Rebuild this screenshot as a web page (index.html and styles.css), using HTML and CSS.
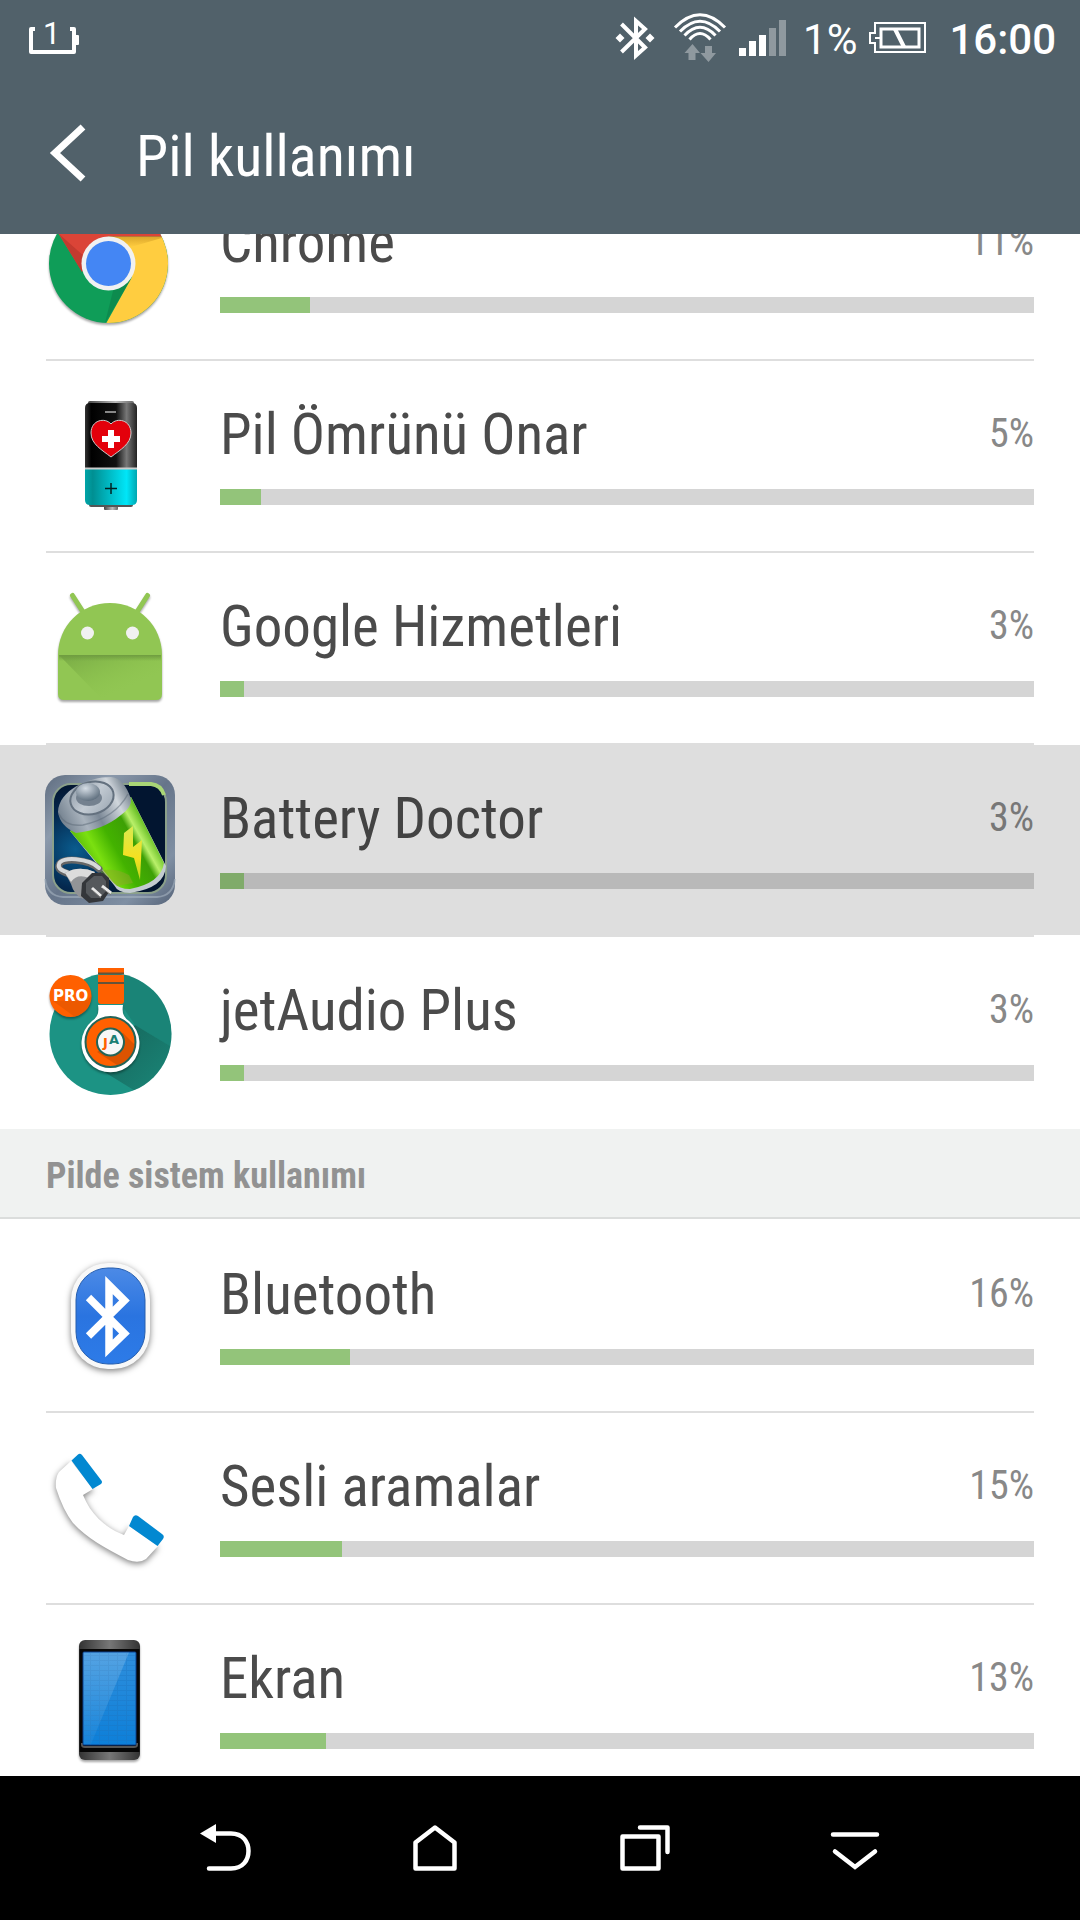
FILE: index.html
```
<!DOCTYPE html>
<html lang="tr">
<head>
    <meta charset="UTF-8">
    <meta name="viewport" content="width=device-width, initial-scale=1.0">
    <title>Pil kullanımı</title>
    <link rel="stylesheet" href="styles.css">
</head>
<body>
    <!-- Durum çubuğu -->
    <div class="status-bar">
        <svg class="status-battery-level" width="52" height="36" viewBox="0 0 52 36">
            <path d="M7 9H3V32H46V9H42" fill="none" stroke="#fff" stroke-width="4" stroke-linejoin="round"/>
            <rect x="46" y="15" width="5" height="10" rx="1" fill="#fff"/>
            <text x="15" y="24" font-size="31" fill="#fff">1</text>
        </svg>
        <div class="status-icons">
            <svg width="38" height="44" viewBox="0 0 38 44">
                <path d="M5.500 8L29 31.500L20 39.500V5L29 13L5.500 36" fill="none" stroke="#fff" stroke-width="4"/>
                <path d="M4 17.500l4.500 4.500-4.500 4.500-4.500-4.500zM34 17.500l4.500 4.500-4.500 4.500-4.500-4.500z" fill="#fff"/>
            </svg>
            <svg class="wifi" width="52" height="50" viewBox="0 0 52 50">
                <g fill="none" stroke="#fff" stroke-width="3">
                    <path d="M1 14.500Q26-11 51 14.500"/>
                    <path d="M6 18.500Q26-2 46 18.500"/>
                    <path d="M10.500 22.500Q26 6 41.500 22.500"/>
                    <path d="M15.500 26.500Q26 14.500 36.500 26.500"/>
                </g>
                <path d="M10.500 40L18.500 31 26 40H21.500V47H14.500V40zM26.500 40H31V33H38V40H42L34.500 49z" fill="#8f999f"/>
            </svg>
            <svg class="signal" width="48" height="36" viewBox="0 0 48 36">
                <path d="M0 28H7V36H0zM10 21H17V36H10zM20 15H27V36H20z" fill="#fff"/>
                <path d="M30 8H37V36H30zM40 0H47V36H40z" fill="#8f999f"/>
            </svg>
            <span class="status-percent">1%</span>
            <svg class="charge" width="58" height="32" viewBox="0 0 58 32">
                <path d="M6 1H56V30H6V21H1V11H6zM6 16H12" fill="none" stroke="#fff" stroke-width="2"/>
                <path d="M12 7H50V25H12z" fill="none" stroke="#fff" stroke-width="3"/>
                <path d="M26 7L35 25" stroke="#fff" stroke-width="4"/>
            </svg>
            <span class="clock">16:00</span>
        </div>
    </div>

    <!-- Başlık -->
    <header class="title-bar">
        <button class="back-button" aria-label="Geri">
            <svg width="38" height="58" viewBox="0 0 38 58">
                <path d="M34 1L6 27L34 53" fill="none" stroke="#fff" stroke-width="7"/>
            </svg>
        </button>
        <h1>Pil kullanımı</h1>
    </header>

    <main class="content">
        <ul class="app-list scrolled">
            <li>
                <a class="app" href="#">
                    <svg class="app-icon" viewBox="0 0 130 130">
                        <defs>
                            <clipPath id="chromeClip"><circle cx="63.500" cy="64.500" r="59.500"/></clipPath>
                            <linearGradient id="chromeShade" x1="0" y1="0" x2="0" y2="1">
                                <stop offset="0" stop-color="#c28c1c" stop-opacity=".6"/>
                                <stop offset="1" stop-color="#c28c1c" stop-opacity="0"/>
                            </linearGradient>
                        </defs>
                        <g class="shadow">
                            <circle cx="63.500" cy="64.500" r="59.500" fill="#0f9d58"/>
                        </g>
                        <g clip-path="url(#chromeClip)">
                            <path d="M63 37.500H130V130H58L87 78z" fill="#ffcd40"/>
                            <path d="M63 37.500H122L86 48z" fill="url(#chromeShade)"/>
                            <path d="M0 0H130V37.500H63L37 73L10 29z" fill="#db4437"/>
                            <path d="M14 35L37 73L40 58z" fill="#b3342a" opacity=".6"/>
                            <path d="M60 124L86 80L68 92z" fill="#0a7040" opacity=".4"/>
                        </g>
                        <circle cx="63.500" cy="64.500" r="27" fill="#f1f1f1"/>
                        <circle cx="63.500" cy="64.500" r="22.500" fill="#4486f4"/>
                    </svg>
                    <div class="app-info">
                        <div class="app-text"><span class="app-name">Chrome</span><span class="app-percent">11%</span></div>
                        <div class="bar"><div class="bar-fill" style="width: 11%"></div></div>
                    </div>
                </a>
            </li>
            <li>
                <a class="app" href="#">
                    <svg class="app-icon" viewBox="0 0 130 130">
                        <defs>
                            <linearGradient id="blackCell">
                                <stop offset="0" stop-color="#333"/>
                                <stop offset=".12" stop-color="#000"/>
                                <stop offset=".6" stop-color="#111"/>
                                <stop offset=".8" stop-color="#777"/>
                                <stop offset="1" stop-color="#222"/>
                            </linearGradient>
                            <linearGradient id="cyanCell">
                                <stop offset="0" stop-color="#00a5a8"/>
                                <stop offset=".15" stop-color="#008f92"/>
                                <stop offset=".8" stop-color="#00e6f8"/>
                                <stop offset="1" stop-color="#00a6b0"/>
                            </linearGradient>
                            <linearGradient id="metal">
                                <stop offset="0" stop-color="#444"/>
                                <stop offset=".6" stop-color="#bbb"/>
                                <stop offset="1" stop-color="#666"/>
                            </linearGradient>
                        </defs>
                        <rect x="43" y="10" width="46" height="6" rx="2" fill="url(#metal)"/>
                        <rect x="59" y="113" width="14" height="6" rx="1" fill="url(#metal)"/>
                        <rect x="44" y="111" width="44" height="5" rx="2" fill="#555"/>
                        <path d="M40 78V17Q40 12 45 12H87Q92 12 92 17V78z" fill="url(#blackCell)"/>
                        <path d="M40 77H92V109Q92 114 87 114H45Q40 114 40 109z" fill="url(#cyanCell)"/>
                        <path d="M40 77.500H92" stroke="#ccc" stroke-width="2"/>
                        <path d="M60 21H71" stroke="#888" stroke-width="2"/>
                        <path d="M66 66C57 59 46 53 46 42C46 29 60 26 66 33C72 26 86 29 86 42C86 53 75 59 66 66z" fill="#e3000b" stroke="#ccc" stroke-width="1"/>
                        <path d="M57 48H75M66 39V57" stroke="#fff" stroke-width="6"/>
                        <path d="M60 97.500H72M66 92V103" stroke="#022" stroke-width="1.500"/>
                    </svg>
                    <div class="app-info">
                        <div class="app-text"><span class="app-name">Pil Ömrünü Onar</span><span class="app-percent">5%</span></div>
                        <div class="bar"><div class="bar-fill" style="width: 5%"></div></div>
                    </div>
                </a>
            </li>
            <li>
                <a class="app" href="#">
                    <svg class="app-icon" viewBox="0 0 130 130">
                        <defs>
                            <linearGradient id="droidShade" x1="0" y1="0" x2="1" y2="1">
                                <stop offset="0" stop-color="#77a845"/>
                                <stop offset=".7" stop-color="#8bc34a" stop-opacity="0"/>
                            </linearGradient>
                            <linearGradient id="droidFold" x1="0" y1="0" x2="0" y2="1">
                                <stop offset="0" stop-color="#6f9c40"/>
                                <stop offset="1" stop-color="#6f9c40" stop-opacity="0"/>
                            </linearGradient>
                        </defs>
                        <g class="shadow">
                            <path d="M27.500 12.500L40 32M102.500 12.500L90 32" stroke="#91c653" stroke-width="5" stroke-linecap="round"/>
                            <path d="M13 72C13 43 36 20 65 20S117 43 117 72V111Q117 117 111 117H19Q13 117 13 111z" fill="#91c653"/>
                        </g>
                        <path d="M14 72H116V96L105 117H58z" fill="url(#droidShade)"/>
                        <rect x="14" y="72" width="102" height="6" fill="url(#droidFold)"/>
                        <circle cx="42.500" cy="50" r="6.500" fill="#f1f1f1"/>
                        <circle cx="87.500" cy="50" r="6.500" fill="#f1f1f1"/>
                    </svg>
                    <div class="app-info">
                        <div class="app-text"><span class="app-name">Google Hizmetleri</span><span class="app-percent">3%</span></div>
                        <div class="bar"><div class="bar-fill" style="width: 3%"></div></div>
                    </div>
                </a>
            </li>
            <li>
                <a class="app pressed" href="#">
                    <svg class="app-icon" viewBox="0 0 130 130">
                        <defs>
                            <linearGradient id="frame" x1="0" y1="0" x2="1" y2="1">
                                <stop offset="0" stop-color="#5f6d80"/>
                                <stop offset=".25" stop-color="#8c9aac"/>
                                <stop offset=".5" stop-color="#66758a"/>
                                <stop offset=".8" stop-color="#7f8fa3"/>
                                <stop offset="1" stop-color="#556378"/>
                            </linearGradient>
                            <radialGradient id="night" cx=".2" cy=".6" r=".6">
                                <stop offset="0" stop-color="#0a5c8e"/>
                                <stop offset=".6" stop-color="#04284e"/>
                                <stop offset="1" stop-color="#021530"/>
                            </radialGradient>
                            <linearGradient id="greenCell" gradientUnits="userSpaceOnUse" x1="42" y1="90" x2="106" y2="54">
                                <stop offset="0" stop-color="#58b80a"/>
                                <stop offset=".2" stop-color="#7be010"/>
                                <stop offset=".45" stop-color="#43b200"/>
                                <stop offset=".72" stop-color="#3da005"/>
                                <stop offset=".82" stop-color="#b9f06a"/>
                                <stop offset="1" stop-color="#50b010"/>
                            </linearGradient>
                            <linearGradient id="steel" gradientUnits="userSpaceOnUse" x1="16" y1="50" x2="84" y2="16">
                                <stop offset="0" stop-color="#6f7d8b"/>
                                <stop offset=".3" stop-color="#a9b3bd"/>
                                <stop offset=".5" stop-color="#7b8896"/>
                                <stop offset=".8" stop-color="#d0d6dc"/>
                                <stop offset="1" stop-color="#76838f"/>
                            </linearGradient>
                            <linearGradient id="capTop" x1="0" y1="0" x2="1" y2="1">
                                <stop offset="0" stop-color="#8c98a5"/>
                                <stop offset=".5" stop-color="#c3cbd3"/>
                                <stop offset="1" stop-color="#98a4b0"/>
                            </linearGradient>
                            <radialGradient id="knob" cx=".4" cy=".3" r=".7">
                                <stop offset="0" stop-color="#d5dde5"/>
                                <stop offset="1" stop-color="#617180"/>
                            </radialGradient>
                            <linearGradient id="bolt" x1="0" y1="0" x2="0" y2="1">
                                <stop offset="0" stop-color="#d8ea50"/>
                                <stop offset=".6" stop-color="#f5e020"/>
                                <stop offset="1" stop-color="#b8d820"/>
                            </linearGradient>
                        </defs>
                        <rect width="130" height="130" rx="20" fill="url(#frame)"/>
                        <rect x="8" y="9" width="113" height="109" rx="18" fill="url(#night)" stroke="#8ba08a" stroke-width="2"/>
                        <path d="M84 9H106Q116 10 119 20" fill="none" stroke="#a9d676" stroke-width="4"/>
                        <path d="M0 104Q2 121 18 122H112Q128 121 130 104" fill="none" stroke="#a5b2c0" stroke-width="2" opacity=".6"/>
                        <path d="M25 56L69 110Q73 118 85 118Q120 113 121 91L86 22z" fill="#c3cbd0"/>
                        <path d="M25 56L69 108Q74 114 85 114Q116 108 119 88L86 22z" fill="url(#greenCell)"/>
                        <path d="M13 37C14 15 43 2 66 2Q79 3 86 24Q87 32 76 40Q58 55 31 58Q15 51 13 37z" fill="url(#steel)"/>
                        <path d="M14 39Q20 52 38 50Q70 43 83 19" fill="none" stroke="#5b6977" stroke-width="1.500" opacity=".5"/>
                        <ellipse cx="47" cy="23" rx="22" ry="16" transform="rotate(-15 47 23)" fill="url(#capTop)" stroke="#64717f" stroke-width="2"/>
                        <ellipse cx="44" cy="23" rx="13" ry="8" fill="#74818f"/>
                        <ellipse cx="43" cy="17" rx="12" ry="9" fill="url(#knob)"/>
                        <path d="M79 58L88 51V72L97 65L95 105L89 83L78 80z" fill="url(#bolt)"/>
                        <path d="M54 96Q70 92 84 100L88 108L72 111z" fill="#8ea62a" opacity=".5"/>
                        <path d="M54 94C44 84 16 82 14 90C12 97 22 97 30 102" fill="none" stroke="#666" stroke-width="7" stroke-linecap="round"/>
                        <path d="M54 93C44 83 16 81 14 89C12 96 22 96 30 101" fill="none" stroke="#d5d8da" stroke-width="4" stroke-linecap="round"/>
                        <path d="M20 98Q34 90 50 97L38 124Q29 120 26 109z" fill="#929497"/>
                        <path d="M20 98Q34 90 50 97L44 103Q32 98 26 107z" fill="#dcdcdc"/>
                        <path d="M37 108L47 98H58L64 103V117L58 126L44 128L36 121z" fill="#34363a"/>
                        <path d="M41 108L49 101H57L61 106V116L55 123H46L41 118z" fill="#55585c"/>
                        <path d="M47 113L56 121M57 111L66 118" stroke="#e8e8e8" stroke-width="3"/>
                        <path d="M47 115L56 123M57 113L66 120" stroke="#777" stroke-width="1"/>
                    </svg>
                    <div class="app-info">
                        <div class="app-text"><span class="app-name">Battery Doctor</span><span class="app-percent">3%</span></div>
                        <div class="bar"><div class="bar-fill" style="width: 3%"></div></div>
                    </div>
                </a>
            </li>
            <li>
                <a class="app" href="#">
                    <svg class="app-icon" viewBox="0 0 130 130">
                        <defs>
                            <clipPath id="jetClip"><circle cx="65.500" cy="67" r="61"/></clipPath>
                            <clipPath id="proClip"><circle cx="25.500" cy="29" r="21"/></clipPath>
                            <linearGradient id="jetShade" gradientUnits="userSpaceOnUse" x1="80" y1="60" x2="125" y2="105">
                                <stop offset="0" stop-color="#14594f" stop-opacity=".7"/>
                                <stop offset="1" stop-color="#14594f" stop-opacity=".3"/>
                            </linearGradient>
                        </defs>
                        <circle cx="65.500" cy="67" r="61" fill="#1c9384"/>
                        <g clip-path="url(#jetClip)">
                            <path d="M78 1L130 40V82L90 58L78 40z" fill="#14594f" opacity=".25"/>
                            <path d="M90 58L130 82V130H100L48 98z" fill="url(#jetShade)"/>
                        </g>
                        <path d="M53 38H78Q76 49 84 54A29 29 0 1 1 47 54Q55 49 53 38z" fill="#fff" class="shadow"/>
                        <path d="M53 1H79V6H53zM53 8H79V15H53zM53 17H79V34Q79 37 76 37H56Q53 37 53 34z" fill="#ff6000"/>
                        <path d="M53 6.500H79M53 16H79" stroke="#64533a" stroke-width="2"/>
                        <circle cx="65.500" cy="75" r="25" fill="#ff6000" stroke="#236458" stroke-width="2"/>
                        <path d="M52 85L72 98A25 25 0 0 0 90 78L78 66z" fill="#b94500" opacity=".5"/>
                        <circle cx="65.500" cy="75" r="13.500" fill="#f7f7f7" stroke="#236458" stroke-width="2"/>
                        <text class="logo" x="58" y="80" font-size="13" fill="#ff6000">J</text>
                        <text class="logo" x="64" y="77" font-size="13" fill="#1c7f73">A</text>
                        <circle cx="25.500" cy="29" r="21" fill="#ff6000" class="shadow"/>
                        <g clip-path="url(#proClip)">
                            <path d="M8 34L30 50L50 40V24L43 33z" fill="#d95200" opacity=".5"/>
                        </g>
                        <text class="logo" x="8" y="34" font-size="15" fill="#fff">PRO</text>
                    </svg>
                    <div class="app-info">
                        <div class="app-text"><span class="app-name">jetAudio Plus</span><span class="app-percent">3%</span></div>
                        <div class="bar"><div class="bar-fill" style="width: 3%"></div></div>
                    </div>
                </a>
            </li>
        </ul>

        <h2>Pilde sistem kullanımı</h2>

        <ul class="app-list">
            <li>
                <a class="app" href="#">
                    <svg class="app-icon" viewBox="0 0 130 130">
                        <defs>
                            <linearGradient id="btBlue" x1="0" y1="0" x2="0" y2="1">
                                <stop offset="0" stop-color="#4c8ae6"/>
                                <stop offset=".5" stop-color="#2a74e0"/>
                                <stop offset="1" stop-color="#2d7be8"/>
                            </linearGradient>
                        </defs>
                        <rect x="26" y="12" width="79" height="106" rx="37" fill="#f8f8f8" class="shadow-strong"/>
                        <rect x="31" y="17" width="69" height="96" rx="32" fill="url(#btBlue)" stroke="#275fae" stroke-width="1"/>
                        <path d="M43.500 46.500L79.500 82.500L64 97.500V34L79.500 49.500L43.500 85" fill="none" stroke="#fff" stroke-width="7.500"/>
                    </svg>
                    <div class="app-info">
                        <div class="app-text"><span class="app-name">Bluetooth</span><span class="app-percent">16%</span></div>
                        <div class="bar"><div class="bar-fill" style="width: 16%"></div></div>
                    </div>
                </a>
            </li>
            <li>
                <a class="app" href="#">
                    <svg class="app-icon" viewBox="0 0 130 130">
                        <path class="shadow-strong" d="M26 18L48 46L38 52C46 72 61 85 79 92L84 83L113 103L101 116Q94 121 83 117C60 105 42 95 28 80Q18 67 11 45Q10 35 14 29z" fill="#fff"/>
                        <path d="M26.500 17.500L33 11.500Q35 10 37 12L56 37Q58 39 56 41L47.500 46zM84 83L88 74Q90 71 93 73L117 91Q120 93 118 96L112.500 103z" fill="#0288d1"/>
                    </svg>
                    <div class="app-info">
                        <div class="app-text"><span class="app-name">Sesli aramalar</span><span class="app-percent">15%</span></div>
                        <div class="bar"><div class="bar-fill" style="width: 15%"></div></div>
                    </div>
                </a>
            </li>
            <li>
                <a class="app" href="#">
                    <svg class="app-icon" viewBox="0 0 130 130">
                        <defs>
                            <linearGradient id="bezel">
                                <stop offset="0" stop-color="#333"/>
                                <stop offset=".5" stop-color="#777"/>
                                <stop offset="1" stop-color="#333"/>
                            </linearGradient>
                            <linearGradient id="screen" x1="0" y1="0" x2="0" y2="1">
                                <stop offset="0" stop-color="#2f8fdd"/>
                                <stop offset="1" stop-color="#0d7fd8"/>
                            </linearGradient>
                            <linearGradient id="glare" x1="0" y1="0" x2="0" y2="1">
                                <stop offset="0" stop-color="#fff" stop-opacity=".18"/>
                                <stop offset="1" stop-color="#fff" stop-opacity=".04"/>
                            </linearGradient>
                            <pattern id="grid" width="9" height="5" patternUnits="userSpaceOnUse">
                                <path d="M0 .5H9M.5 0V5" stroke="#1c72bd" stroke-width="1" opacity=".35"/>
                            </pattern>
                        </defs>
                        <rect x="34" y="5" width="61" height="120" rx="6" fill="url(#bezel)" class="shadow"/>
                        <rect x="34.500" y="14" width="60" height="103" fill="#060606"/>
                        <path d="M37 108V110Q37 112 40 112H89Q92 112 92 110V108" fill="none" stroke="#555" stroke-width="2"/>
                        <rect x="38" y="17" width="53" height="93" rx="1" fill="url(#screen)" stroke="#0b3f8c" stroke-width="1"/>
                        <rect x="38.500" y="17.500" width="52" height="92" fill="url(#grid)"/>
                        <path d="M38.500 17.500H84L46 109H38.500z" fill="url(#glare)"/>
                    </svg>
                    <div class="app-info">
                        <div class="app-text"><span class="app-name">Ekran</span><span class="app-percent">13%</span></div>
                        <div class="bar"><div class="bar-fill" style="width: 13%"></div></div>
                    </div>
                </a>
            </li>
        </ul>
    </main>

    <!-- Gezinme tuşları -->
    <nav class="nav-bar">
        <button aria-label="Geri">
            <svg width="52" height="48" viewBox="0 0 52 48">
                <path d="M13 9.500H32C44 9.500 49.500 18 49.500 27S44 44.500 32 44.500H10" fill="none" stroke="#fff" stroke-width="4.500" stroke-linecap="round"/>
                <path d="M1 9.500L17 0V19z" fill="#fff"/>
            </svg>
        </button>
        <button aria-label="Ana ekran">
            <svg width="52" height="48" viewBox="0 0 52 48">
                <path d="M6.500 18.500L26 3.500L45.500 18.500V44.500H6.500z" fill="none" stroke="#fff" stroke-width="4.500" stroke-linejoin="round"/>
            </svg>
        </button>
        <button aria-label="Son uygulamalar">
            <svg width="52" height="48" viewBox="0 0 52 48">
                <path d="M3.500 12.500H39.500V44.500H3.500zM21 3.500H48.500V28" fill="none" stroke="#fff" stroke-width="4.500" stroke-linecap="round" stroke-linejoin="round"/>
            </svg>
        </button>
        <button aria-label="Gizle">
            <svg width="52" height="48" viewBox="0 0 52 48">
                <path d="M4 10.500H48M6 27.500L26 43L46 27.500" fill="none" stroke="#fff" stroke-width="4.500" stroke-linecap="round"/>
            </svg>
        </button>
    </nav>
</body>
</html>
```
FILE: styles.css
```
* {
    box-sizing: border-box;
}

body {
    display: flex;
    flex-direction: column;
    height: 100vh;
    margin: 0;
    background-color: #fff;
    color: #4b4b4b;
    font-family: "Roboto Condensed", "Liberation Sans Narrow", Roboto, sans-serif;
}

svg {
    display: block;
    flex-shrink: 0;
    overflow: visible;
}

button {
    display: flex;
    align-items: center;
    justify-content: center;
    padding: 0;
    border: none;
    background: none;
    cursor: pointer;
}

/* Durum çubuğu */
.status-bar {
    display: flex;
    align-items: center;
    justify-content: space-between;
    height: 76px;
    padding: 0 24px 0 28px;
    background-color: #51616a;
    color: #fff;
    font-family: Roboto, sans-serif;
    font-size: 42px;
    line-height: 48px;
}

.status-icons {
    display: flex;
    align-items: center;
}

.wifi {
    margin-left: 20px;
}

.signal {
    margin-left: 13px;
}

.status-percent {
    margin-left: 16px;
    padding-top: 3px;
}

.charge {
    margin-left: 12px;
}

.clock {
    margin-left: 22px;
    padding-top: 3px;
    font-weight: 500;
}

/* Başlık */
.title-bar {
    display: flex;
    align-items: center;
    height: 158px;
    padding-left: 49px;
    background-color: #51616a;
    color: #fff;
}

.back-button {
    margin-right: 49px;
}

h1 {
    margin: 0;
    padding-top: 2px;
    font-size: 58px;
    font-weight: 400;
    line-height: 68px;
}

/* Liste */
.content {
    flex: 1;
    min-height: 0;
    overflow: hidden;
}

.app-list {
    margin: 0;
    padding: 0;
    list-style: none;
}

/* ilk satır başlığın altına kaymış durumda */
.scrolled {
    margin-top: -65px;
}

.app {
    display: flex;
    align-items: center;
    gap: 45px;
    height: 190px;
    padding: 0 46px 0 45px;
    color: inherit;
    text-decoration: none;
}

.app-list li::after {
    content: "";
    display: block;
    height: 2px;
    margin: 0 46px;
    background-color: #dedede;
}

.scrolled li:last-child::after {
    background-color: transparent;
}

.app-icon {
    width: 130px;
    height: 130px;
}

.app-info {
    flex: 1;
    padding-bottom: 6px;
}

.app-text {
    display: flex;
    align-items: center;
    justify-content: space-between;
    height: 68px;
    margin-bottom: 20px;
}

.app-name {
    font-size: 57px;
    line-height: 68px;
}

.app-percent {
    padding-bottom: 2px;
    color: #888;
    font-size: 40px;
    line-height: 48px;
}

.bar {
    height: 16px;
    background-color: #d5d5d5;
}

.bar-fill {
    height: 100%;
    background-color: #93c47a;
}

.pressed {
    background-color: #dedede;
    color: #434343;
}

.pressed .app-percent {
    color: #777;
}

.pressed .bar {
    background-color: #b9b9b9;
}

.pressed .bar-fill {
    background-color: #80ab6a;
}

h2 {
    height: 90px;
    margin: 0 0 2px;
    padding: 26px 46px 20px;
    border-bottom: 2px solid #dbdddc;
    background-color: #f0f2f1;
    color: #929292;
    font-size: 36px;
    font-weight: 700;
    line-height: 42px;
}

/* İkonlar */
.shadow {
    filter: drop-shadow(0 2px 1px rgba(0, 0, 0, 0.35));
}

.shadow-strong {
    filter: drop-shadow(0 2px 3px rgba(0, 0, 0, 0.5));
}

.logo {
    font-family: "DejaVu Sans", sans-serif;
    font-weight: 700;
}

/* Gezinme tuşları */
.nav-bar {
    display: grid;
    grid-template-columns: repeat(4, 1fr);
    height: 144px;
    padding: 0 120px;
    background-color: #000;
}
```
